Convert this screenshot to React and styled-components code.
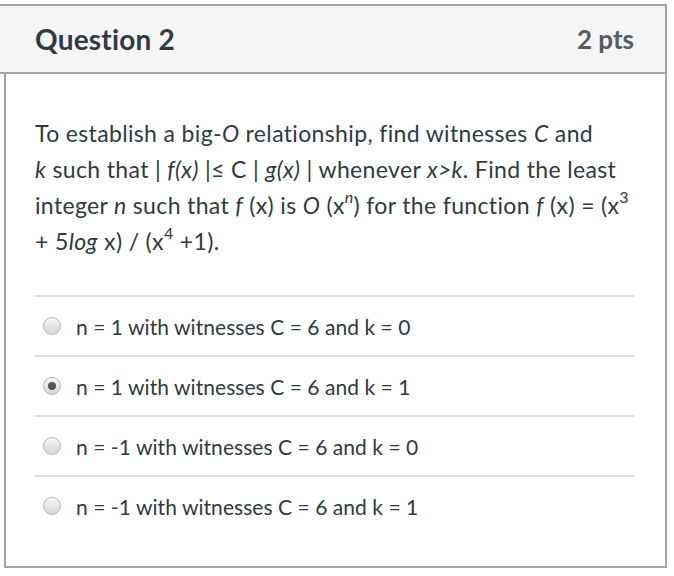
import React from "react";
import styled, { createGlobalStyle } from "styled-components";

const Global = createGlobalStyle`
  html, body { margin: 0; padding: 0; background: #fff; }
  body { font-family: Lato, "Open Sans", sans-serif; color: #2d3b45; }
`;

const Page = styled.div`
  width: 674px;
  height: 576px;
  padding-top: 4px;
  box-sizing: border-box;
`;

const Card = styled.div`
  width: 667px;
  display: flex;
  flex-direction: column;
`;

const Header = styled.div`
  height: 66px;
  background: #f5f5f5;
  border-top: 2px solid #a5a5a5;
  border-right: 2px solid #a5a5a5;
  border-bottom: 2px solid #a5a5a5;
  display: flex;
  align-items: center;
  justify-content: space-between;
  padding: 0 31px 0 35px;
`;

const Title = styled.h2`
  margin: 0;
  font-family: Lato, sans-serif;
  font-weight: 700;
  font-size: 28px;
  letter-spacing: 0.2px;
  color: #2d3b45;
`;

const Points = styled.span`
  font-family: Lato, sans-serif;
  font-weight: 700;
  font-size: 26px;
  color: #565b60;
`;

const Body = styled.div`
  margin-left: 4px;
  height: 494px;
  border-left: 2px solid #a5a5a5;
  border-right: 2px solid #a5a5a5;
  border-bottom: 2px solid #a5a5a5;
  padding: 41px 31px 0 28px;
  box-sizing: border-box;
`;

const QuestionText = styled.p`
  margin: 0 0 36px 1px;
  font-size: 23px;
  letter-spacing: 0.35px;
  line-height: 36px;
  color: #2d3b45;
  white-space: nowrap;

  sup {
    font-size: 16px;
    line-height: 0;
    vertical-align: 11px;
  }
`;

const Answers = styled.div`
  display: flex;
  flex-direction: column;
`;

const Answer = styled.label`
  display: flex;
  align-items: center;
  height: 60px;
  border-top: 2px solid #e0e0e0;
  box-sizing: border-box;
  padding-left: 9px;
  gap: 15px;
  font-size: 21px;
  letter-spacing: 0.05px;
  color: #2d3b45;
`;

const Radio = styled.span`
  width: 16px;
  height: 16px;
  border-radius: 50%;
  border: 1px solid #b3b3b3;
  background: linear-gradient(#f6f6f6, #d6d6d6);
  box-shadow: inset 0 1px 1px rgba(255, 255, 255, 0.8);
  display: flex;
  align-items: center;
  justify-content: center;
  flex: none;

  &::after {
    content: "";
    width: 8px;
    height: 8px;
    border-radius: 50%;
    background: ${(p) => (p.$checked ? "#555" : "transparent")};
  }
`;

const answers = [
  { text: "n = 1 with witnesses C = 6 and k = 0", checked: false },
  { text: "n = 1 with witnesses C = 6 and k = 1", checked: true },
  { text: "n = -1 with witnesses C = 6 and k = 0", checked: false },
  { text: "n = -1 with witnesses C = 6 and k = 1", checked: false },
];

export default function App() {
  return (
    <Page>
      <Global />
      <Card>
        <Header>
          <Title>Question 2</Title>
          <Points>2 pts</Points>
        </Header>
        <Body>
          <QuestionText>
            To establish a big-<i>O</i> relationship, find witnesses <i>C</i> and
            <br />
            <i>k</i> such that | <i>f(x)</i> |≤ C | <i>g(x)</i> | whenever <i>x&gt;k</i>. Find the least
            <br />
            integer <i>n</i> such that <i>f</i> (x) is <i>O</i> (x<sup><i>n</i></sup>) for the function <i>f</i> (x) = (x<sup>3</sup>
            <br />+ 5<i>log</i> x) / (x<sup>4</sup> +1).
          </QuestionText>
          <Answers>
            {answers.map((a) => (
              <Answer key={a.text}>
                <Radio $checked={a.checked} />
                {a.text}
              </Answer>
            ))}
          </Answers>
        </Body>
      </Card>
    </Page>
  );
}
